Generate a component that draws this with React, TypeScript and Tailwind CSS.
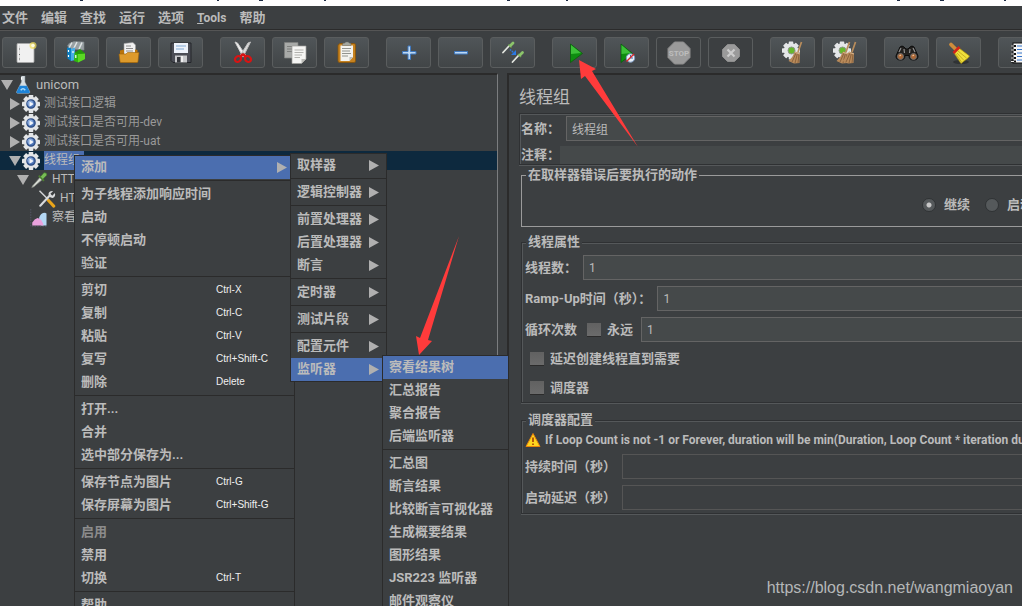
import { Fragment, useState } from "react"
import type { ReactNode } from "react"

type MenuEntry = { label: string; shortcut?: string; sub?: boolean; active?: boolean; disabled?: boolean }

const contextMenu: MenuEntry[][] = [
  [{ label: "添加", sub: true, active: true }],
  [{ label: "为子线程添加响应时间" }, { label: "启动" }, { label: "不停顿启动" }, { label: "验证" }],
  [
    { label: "剪切", shortcut: "Ctrl-X" },
    { label: "复制", shortcut: "Ctrl-C" },
    { label: "粘贴", shortcut: "Ctrl-V" },
    { label: "复写", shortcut: "Ctrl+Shift-C" },
    { label: "删除", shortcut: "Delete" },
  ],
  [{ label: "打开..." }, { label: "合并" }, { label: "选中部分保存为..." }],
  [
    { label: "保存节点为图片", shortcut: "Ctrl-G" },
    { label: "保存屏幕为图片", shortcut: "Ctrl+Shift-G" },
  ],
  [{ label: "启用", disabled: true }, { label: "禁用" }, { label: "切换", shortcut: "Ctrl-T" }],
  [{ label: "帮助" }],
]

const addMenu: MenuEntry[][] = [
  [{ label: "取样器", sub: true }],
  [{ label: "逻辑控制器", sub: true }],
  [{ label: "前置处理器", sub: true }, { label: "后置处理器", sub: true }, { label: "断言", sub: true }],
  [{ label: "定时器", sub: true }],
  [{ label: "测试片段", sub: true }],
  [{ label: "配置元件", sub: true }, { label: "监听器", sub: true, active: true }],
]

const listenerMenu: MenuEntry[][] = [
  [{ label: "察看结果树", active: true }, { label: "汇总报告" }, { label: "聚合报告" }, { label: "后端监听器" }],
  [
    { label: "汇总图" },
    { label: "断言结果" },
    { label: "比较断言可视化器" },
    { label: "生成概要结果" },
    { label: "图形结果" },
    { label: "JSR223 监听器" },
    { label: "邮件观察仪" },
  ],
]

function Menu({ groups, className }: { groups: MenuEntry[][]; className: string }) {
  return (
    <div role="menu" className={`absolute border border-[#2b2b2b] bg-[#3c3f41] ${className}`}>
      {groups.map((group, i) => (
        <Fragment key={i}>
          {i > 0 && <div className="h-1 pt-px"><div className="h-px bg-[#2b2b2b]" /></div>}
          {group.map((item) => (
            <button
              key={item.label}
              role="menuitem"
              disabled={item.disabled}
              className={`flex h-[23px] w-full items-center pb-px pl-[6px] pr-[7px] text-left font-bold ${
                item.active ? "bg-[#4b6eaf]" : ""
              } ${item.disabled ? "text-[#8c8c8c]" : "text-[#bbbbbb]"}`}
            >
              <span className="flex-1">{item.label}</span>
              {item.shortcut && (
                <span className="w-[71px] font-['Liberation_Sans',sans-serif] text-[10px] font-normal text-[#f0f0f0]">
                  {item.shortcut}
                </span>
              )}
              {item.sub && (
                <svg width="10" height="11" viewBox="0 0 10 11">
                  <path d="M0 0L10 5.5L0 11Z" fill="#b0b0b0" />
                </svg>
              )}
            </button>
          ))}
        </Fragment>
      ))}
    </div>
  )
}

function Svg({ children, size = 24 }: { children: ReactNode; size?: number }) {
  return (
    <svg width={size} height={size} viewBox="0 0 24 24" className="shrink-0" aria-hidden="true">
      {children}
    </svg>
  )
}

const gearTeeth = [0, 45, 90, 135, 180, 225, 270, 315]

function GearShape({ cx, cy, r }: { cx: number; cy: number; r: number }) {
  return (
    <g fill="#e4e6e8">
      {gearTeeth.map((a) => (
        <rect key={a} x={cx - r * 0.25} y={cy - r} width={r * 0.5} height={r * 0.5} rx="0.6" transform={`rotate(${a} ${cx} ${cy})`} />
      ))}
      <circle cx={cx} cy={cy} r={r * 0.8} />
    </g>
  )
}

function Dropper({ transform }: { transform?: string }) {
  return (
    <g transform={transform}>
      <path d="M2 13L9 5L11 7L3.500 13.500L1.500 14.500Z" fill="#d5d9d2" stroke="#70756f" strokeWidth="0.6" />
      <path d="M7.500 4L12 8.500" stroke="#4c7c32" strokeWidth="1.600" />
      <path d="M9 5L12 1.500Q14.500 1 14.500 3.500L11 7Z" fill="#79bd57" stroke="#3f7c25" strokeWidth="0.5" />
    </g>
  )
}

function SmallDropper({ transform }: { transform: string }) {
  return (
    <g transform={transform}>
      <path d="M1 11.500L7 5" stroke="#e2e5df" strokeWidth="1.800" strokeLinecap="round" />
      <path d="M6.500 3.500L9.500 6.500" stroke="#6fa350" strokeWidth="1.500" />
      <path d="M8.500 4.500L11 2" stroke="#8cc46b" strokeWidth="2.800" strokeLinecap="round" />
    </g>
  )
}

function BrownBroom({ x = 0 }: { x?: number }) {
  return (
    <g transform={`translate(${x} 0)`}>
      <path d="M20.500 1L17 11" stroke="#b98d5c" strokeWidth="1.700" />
      <path d="M14 10.500L19 12L18.500 22L13 22.500L7.500 20Q12 16 14 10.500Z" fill="#b88a5a" />
      <path d="M15 12L11 21M16.500 12L14 22M18 12.500L17 22" stroke="#775231" strokeWidth="0.7" />
      <path d="M14 11.500L19 13" stroke="#d9b48b" strokeWidth="1" />
    </g>
  )
}

const icons: Record<string, ReactNode> = {
  new: (
    <>
      <rect x="4" y="2.500" width="17" height="19" rx="1" fill="#f1f1f1" stroke="#a7a7a7" strokeWidth="0.8" />
      <path d="M6.500 4.500V20" stroke="#dadada" />
      <path d="M6 8h1M6 13.500h1M6 18h1" stroke="#6a6a6a" />
      <circle cx="20" cy="4.500" r="3.500" fill="#f4df59" opacity="0.7" />
      <circle cx="20" cy="4.500" r="1.800" fill="#fffce0" />
    </>
  ),
  templates: (
    <>
      <path d="M4 2.500L9 .5L19 1V9L6 8L2.500 5Z" fill="#98a0a3" stroke="#7f888b" strokeWidth="0.6" />
      <path d="M7 1.500L4 7M12 1L9 7M17 1.500L14 8" stroke="#dfe4e5" strokeWidth="1.500" />
      <path d="M2 6.500L6 7V20L2.500 17.500Z" fill="#0c7fc4" />
      <path d="M6 8L10 6.500V19L6 20Z" fill="#46ade8" />
      <path d="M3.500 9V11M3.500 14V16M8 10V12" stroke="#fff" strokeWidth="1.200" />
      <path d="M15 9L20 12.500V18L13 21.500L9 20L9.500 12Z" fill="#2fb80e" />
      <path d="M13 12.500L20 12.500V18L13 21.500Z" fill="#5bd824" />
      <path d="M9.500 12L15 8L20 12.500L13 13Z" fill="#23990b" />
      <path d="M10.800 14V17" stroke="#fff" strokeWidth="1.200" />
    </>
  ),
  open: (
    <>
      <path d="M7 2.500L16 1.500L18.500 4V15H7Z" fill="#f1f1f1" stroke="#9b9b9b" strokeWidth="0.6" />
      <path d="M9 5H14M9 7.500H16M9 10H16" stroke="#8c8c8c" />
      <path d="M3 9.500L7 8.500V14H18V8.500L20.500 9V20.500Q20.500 21.500 19.500 21.500H4Q3 21.500 3 20Z" fill="#b9740b" />
      <path d="M2 13H9L10.500 11.500H22L21 20.500Q21 21.500 20 21.500H4Q3 21.500 3 20.500Z" fill="#dd9a2b" stroke="#9a6108" strokeWidth="0.6" />
    </>
  ),
  save: (
    <>
      <path d="M2 2H22V21.500H4L2 19.500Z" fill="#4b4d55" stroke="#24262b" />
      <rect x="5" y="2" width="14" height="10" fill="#edf2fa" />
      <path d="M7 5H17M7 8H15" stroke="#82a9d3" strokeWidth="1.200" />
      <path d="M6 14.500H18V21.500H6Z" fill="#c7c8cb" />
      <rect x="8" y="16" width="3.500" height="5.500" fill="#33353a" />
      <path d="M13 15V21" stroke="#efefef" strokeWidth="2" />
    </>
  ),
  cut: (
    <>
      <path d="M4 1L6.500 2L14.500 14L12 16Z" fill="#f2f2f2" stroke="#c9c9c9" strokeWidth="1" />
      <path d="M19.500 1L17 2L9.500 14L12 16Z" fill="#dcdcdc" stroke="#c0c0c0" strokeWidth="1" />
      <circle cx="12" cy="12.500" r="0.9" fill="#777" />
      <path d="M12 13L9 16M12 13L15 16" stroke="#d81414" strokeWidth="2.500" />
      <ellipse cx="7" cy="18" rx="3.200" ry="2.700" fill="none" stroke="#d81414" strokeWidth="2.200" transform="rotate(-35 7 18)" />
      <ellipse cx="17" cy="18" rx="3.200" ry="2.700" fill="none" stroke="#d81414" strokeWidth="2.200" transform="rotate(35 17 18)" />
    </>
  ),
  copy: (
    <>
      <path d="M1.500 1.500H15V17H1.500Z" fill="#a8aaa8" stroke="#7f817f" strokeWidth="0.7" />
      <path d="M4 5.500H12M4 8H12M4 10.500H12" stroke="#7d7f7d" />
      <path d="M9 5H23V18L18.500 22.500H9Z" fill="#f5f5f3" stroke="#9f9f9b" strokeWidth="0.7" />
      <path d="M18.500 22.500V18H23Z" fill="#bcbcb8" />
      <path d="M11.500 9H20.500M11.500 11.500H20.500M11.500 14H19M11.500 16.500H17" stroke="#b2b2ae" />
    </>
  ),
  paste: (
    <>
      <path d="M4 3.500Q4 2.500 5 2.500H19Q20.500 2.500 20.500 4V20Q20.500 21.500 19 21.500H5Q3 21.500 3 20V4Z" fill="#c68220" stroke="#885409" strokeWidth="0.8" />
      <path d="M5.500 4.500H18V16L14.500 20H5.500Z" fill="#f3f3ef" />
      <path d="M14.500 20V16H18Z" fill="#bdbdb8" />
      <path d="M7.500 4.500V3Q8 2 10 2L10.500 1H13.500L14 2Q16 2 16 3V4.500Z" fill="#a3a69f" stroke="#686b65" strokeWidth="0.5" />
      <path d="M7 7.500H16M7 10H15M7 12.500H16M7 15H13" stroke="#92948f" />
    </>
  ),
  plus: <path d="M11 5h2.500v5.500h5.500v2.500H13.500v5.500h-2.500v-5.500H5.500v-2.500H11Z" fill="#bcd8f5" stroke="#3f78bf" />,
  minus: <path d="M5.500 10.500h13v2.500h-13Z" fill="#bcd8f5" stroke="#3f78bf" />,
  toggle: (
    <>
      <SmallDropper transform="translate(1 0)" />
      <SmallDropper transform="translate(10.500 9.500)" />
      <path d="M9 8.500L13 12" stroke="#2b78e4" strokeWidth="1.500" strokeDasharray="1.500 1" />
      <path d="M15 9V14H10Z" fill="#2b78e4" />
    </>
  ),
  start: (
    <>
      <path d="M7.500 3L19.500 12.500L7.500 21.500Z" fill="#0e8d10" stroke="#075c09" strokeWidth="0.7" />
      <path d="M8 4L18 12L8 13Z" fill="#3cc038" />
    </>
  ),
  startNoTimers: (
    <>
      <path d="M6 3L17.500 12.500L6 21.500Z" fill="#0e8d10" stroke="#075c09" strokeWidth="0.7" />
      <path d="M6.500 4L16 12L6.500 13Z" fill="#3cc038" />
      <circle cx="15.500" cy="17" r="4.200" fill="#e8eff8" stroke="#7d9ac2" />
      <path d="M15.500 14V17H18" stroke="#3d6db0" fill="none" />
      <path d="M11.500 20.500L19 13" stroke="#d92929" strokeWidth="1.400" />
    </>
  ),
  stop: (
    <>
      <path d="M7.500 1H16.500L23 7.500V16.500L16.500 23H7.500L1 16.500V7.500Z" fill="#9a9a9a" stroke="#8d8d8d" />
      <text x="12" y="15" textAnchor="middle" fontSize="8" fontWeight="bold" fill="#bdbdbd">STOP</text>
    </>
  ),
  shutdown: (
    <>
      <path d="M8.500 3.500H15.500L20.500 8.500V15.500L15.500 20.500H8.500L3.500 15.500V8.500Z" fill="#9a9a9a" stroke="#8d8d8d" />
      <path d="M8.500 8.500L15.500 15.500M15.500 8.500L8.500 15.500" stroke="#cccccc" strokeWidth="2.200" />
    </>
  ),
  clear: (
    <>
      <GearShape cx={10} cy={9.5} r={9} />
      <circle cx="10.500" cy="9.500" r="3.500" fill="#66b82d" stroke="#8c968a" />
      <BrownBroom />
    </>
  ),
  clearAll: (
    <>
      <GearShape cx={9} cy={9.500} r={9} />
      <circle cx="9.500" cy="9.500" r="3.500" fill="#66b82d" stroke="#8c968a" />
      <BrownBroom x={-4} />
      <BrownBroom x={2} />
    </>
  ),
  search: (
    <>
      <path d="M5 6Q7 4 9 6L11 8H13L15 6Q17 4 19 6L23 15Q23 19 18.500 19Q14 19 14 14.500H10Q10 19 5.500 19Q1 19 1 15Z" fill="#23211f" stroke="#0c0c0c" />
      <path d="M6 7L4 11M18 7L20 11M9 8L9.500 12M15 8L14.500 12" stroke="#8f8f8f" strokeWidth="1.200" />
      <circle cx="5.500" cy="15.500" r="3" fill="#ab6635" stroke="#6d6d6d" />
      <circle cx="18.500" cy="15.500" r="3" fill="#ab6635" stroke="#6d6d6d" />
      <path d="M4.500 15L6 14M17.500 15L19 14" stroke="#f1c49c" strokeWidth="1.200" />
    </>
  ),
  reset: (
    <>
      <ellipse cx="14" cy="21" rx="8" ry="2" fill="#303335" />
      <path d="M4 3.500L9.500 9" stroke="#cf8c3b" strokeWidth="3.800" strokeLinecap="round" />
      <path d="M12 7L22.500 15L21 17L14 22.500L7 12Z" fill="#efe03c" stroke="#a98e0b" strokeWidth="0.7" />
      <path d="M11 10L19.500 17M10 12L17 19.500M8.500 12.500L14.500 21" stroke="#b69b12" strokeWidth="0.7" />
      <path d="M12.500 6L6.500 12" stroke="#d32418" strokeWidth="2.600" />
    </>
  ),
  helper: (
    <>
      <rect x="4" y="2" width="19" height="20" fill="#f7f7f7" stroke="#111" />
      <path d="M8 5H20M8 8.500H20M8 12H20M8 15.500H20M8 19H20" stroke="#3574c9" />
      <path d="M2 5H7M2 9H7M2 13H7M2 17H7M2 20.500H7" stroke="#111" strokeWidth="2.200" />
      <path d="M2 5H5M2 9H5M2 13H5M2 17H5M2 20.500H5" stroke="#eee" />
    </>
  ),
  flask: (
    <>
      <path d="M10 0H14.500V8L21 21Q21.500 23 19.500 23H5Q3 23 3.500 21L10 8Z" fill="#d6dde1" stroke="#aeb9c0" strokeWidth="0.6" />
      <path d="M7.500 13H17L21 21Q21.500 23 19.500 23H5Q3 23 3.500 21Z" fill="#1c83d8" />
      <path d="M9 19Q12 15 15 19" stroke="#a5d8fa" strokeWidth="2" fill="none" />
      <path d="M10 1.500V5" stroke="#fff" strokeWidth="1.500" />
    </>
  ),
  group: (
    <>
      <GearShape cx={12} cy={12} r={12} />
      <circle cx="12" cy="12" r="5.500" fill="#4d74b5" stroke="#2c4c84" strokeWidth="1.800" />
      <circle cx="11" cy="11" r="3.800" fill="#86a7da" />
      <path d="M10 8.500L15.500 12L10 15.500Z" fill="#f4f7fb" />
    </>
  ),
  sampler: <Dropper transform="translate(0 0) scale(1.550)" />,
  config: (
    <>
      <path d="M2 1L15 14" stroke="#d2d4d6" strokeWidth="2" />
      <path d="M14 14L21 21.500" stroke="#e9a51a" strokeWidth="4" strokeLinecap="round" />
      <path d="M3 21L16 7" stroke="#d9dbdd" strokeWidth="2.800" strokeLinecap="round" />
      <path d="M20 1.500L16.500 5L19 7.500L22.500 4Q24 9 19.500 10.500Q14 10 14 5Q15 1 20 1.500Z" fill="#d9dbdd" />
    </>
  ),
  results: (
    <>
      <path d="M1 0V23H23" stroke="#5b5f70" strokeWidth="1" fill="none" strokeDasharray="2 1.500" />
      <path d="M12 12Q14 5 20 5L22 6V22H15Z" fill="#b4d8f5" />
      <path d="M3 22V18Q6 13 10 12Q16 13 18 22Z" fill="#eaa2de" />
    </>
  ),
}

const toolGroups = [
  [["new", "新建"], ["templates", "模板"], ["open", "打开"], ["save", "保存"]],
  [["cut", "剪切"], ["copy", "复制"], ["paste", "粘贴"]],
  [["plus", "展开"], ["minus", "收起"], ["toggle", "切换"]],
  [["start", "启动"], ["startNoTimers", "不停顿开始"], ["stop", "停止"], ["shutdown", "关闭"]],
  [["clear", "清除"], ["clearAll", "清除全部"]],
  [["search", "查找"], ["reset", "重置查找"]],
  [["helper", "函数助手"]],
]

const treeRows = [
  { label: "unicom", icon: "flask", pad: "pl-px", open: true, light: true },
  { label: "测试接口逻辑", icon: "group", pad: "pl-[9px]", open: false },
  { label: "测试接口是否可用-dev", icon: "group", pad: "pl-[9px]", open: false },
  { label: "测试接口是否可用-uat", icon: "group", pad: "pl-[9px]", open: false },
  { label: "线程组", icon: "group", pad: "pl-[9px]", open: true, light: true, selected: true },
  { label: "HTTP", icon: "sampler", pad: "pl-[17px]", open: true, light: true },
  { label: "HTTP", icon: "config", pad: "pl-[38px]", light: true },
  { label: "察看结果树", icon: "results", pad: "pl-[30px]", light: true },
]

function Tree() {
  return (
    <ul role="tree" className="text-xs leading-[19px]">
      {treeRows.map((row, i) => (
        <li
          key={i}
          role="treeitem"
          className={`flex h-[19px] items-center ${row.pad} ${row.selected ? "bg-[#0d293e]" : ""} ${
            row.light ? "text-[#bbbbbb]" : "text-[#999999]"
          }`}
        >
          {row.open !== undefined && (
            <svg width="12" height="12" viewBox="0 0 12 12" className="mr-px shrink-0">
              <path d={row.open ? "M0 1H12L6 11Z" : "M1 0L11 6L1 12Z"} fill="#b0b0b0" />
            </svg>
          )}
          <Svg size={18}>{icons[row.icon]}</Svg>
          <span className={`ml-1 ${row.selected ? "bg-[#4b6eaf] pr-1" : ""} ${row.icon === "flask" ? "text-[13px]" : ""}`}>
            {row.label}
          </span>
        </li>
      ))}
    </ul>
  )
}

const inputBase = "min-w-0 flex-1 px-[5px] text-xs font-normal text-[#bbbbbb] outline-none"
const inputClass = `h-[25px] border border-r-0 border-[#646464] bg-[#45494a] ${inputBase}`
const disabledInput = `h-[25px] border border-r-0 border-[#555555] bg-[#3c3f41] ${inputBase}`
const checkClass =
  "h-[14px] w-[14px] shrink-0 appearance-none border-b border-[#2b2b2b] bg-gradient-to-b from-[#616161] to-[#6b6b6b] checked:from-[#4b6eaf] checked:to-[#4b6eaf]"
const radioClass =
  "h-[14px] w-[14px] shrink-0 appearance-none rounded-full border border-[#2f3234] bg-[#55595b] checked:bg-[radial-gradient(circle,#c8c8c8_2px,#55595b_3px)]"
const etched = "border border-r-0 border-[#2f3133] shadow-[inset_1px_1px_0_#55585a,0_1px_0_#55585a]"

function Group({ title, children, className }: { title: string; children: ReactNode; className: string }) {
  return (
    <section className={`relative ml-[2px] ${className}`}>
      <h2 className="absolute -top-[10px] left-1 bg-[#3c3f41] px-[2px] leading-[18px]">{title}</h2>
      {children}
    </section>
  )
}

function ThreadGroupForm() {
  const [name, setName] = useState("线程组")
  const [threads, setThreads] = useState("1")
  const [rampUp, setRampUp] = useState("1")
  const [loops, setLoops] = useState("1")

  return (
    <form className="ml-[9px] min-w-0 flex-1 border-l-2 border-t-2 border-[#2b2b2b] pl-[10px] font-bold">
      <h1 className="mt-[11px] text-[17px] font-normal leading-[22px]">线程组</h1>

      <div className={`mt-[5px] h-[52px] pl-px pt-[2px] ${etched}`}>
        <div className="flex items-center gap-[6px]">
          <label htmlFor="name">名称：</label>
          <input id="name" value={name} onChange={(e) => setName(e.target.value)} className={inputClass} />
        </div>
        <div className="mt-[5px] flex h-[18px] items-center">
          <label htmlFor="comment">注释：</label>
          <input id="comment" className={`h-[18px] bg-[#45494a] ${inputBase}`} />
        </div>
      </div>

      {/* 错误处理 */}
      <Group title="在取样器错误后要执行的动作" className="mt-[10px] h-[52px] border border-r-0 border-[#9b9b9b]">
        <div className="flex items-center gap-[15px] overflow-hidden whitespace-nowrap pl-[400px] pt-5">
          <label className="flex shrink-0 items-center gap-2">
            <input type="radio" name="action" defaultChecked className={radioClass} />
            继续
          </label>
          <label className="flex shrink-0 items-center gap-2">
            <input type="radio" name="action" className={radioClass} />
            启动下一进程循环
          </label>
        </div>
      </Group>

      {/* 线程属性 */}
      <Group title="线程属性" className={`mt-[15px] pb-1 pl-[3px] pt-3 ${etched}`}>
        <div className="flex flex-col gap-[6px]">
          <div className="flex items-center gap-[6px]">
            <label htmlFor="threads">线程数：</label>
            <input id="threads" value={threads} onChange={(e) => setThreads(e.target.value)} className={inputClass} />
          </div>
          <div className="flex items-center gap-[6px]">
            <label htmlFor="ramp">Ramp-Up时间（秒）：</label>
            <input id="ramp" value={rampUp} onChange={(e) => setRampUp(e.target.value)} className={inputClass} />
          </div>
          <div className="flex items-center gap-2">
            <label htmlFor="loops">循环次数</label>
            <label className="flex items-center gap-[6px] pl-[2px]">
              <input type="checkbox" className={checkClass} />
              永远
            </label>
            <input id="loops" value={loops} onChange={(e) => setLoops(e.target.value)} className={inputClass} />
          </div>
        </div>
        <div className="mt-[7px] pl-[5px]">
          <label className="flex h-5 items-center gap-[6px]">
            <input type="checkbox" className={checkClass} />
            延迟创建线程直到需要
          </label>
          <label className="mt-[9px] flex h-5 items-center gap-[6px]">
            <input type="checkbox" className={checkClass} />
            调度器
          </label>
        </div>
      </Group>

      {/* 调度器配置 */}
      <Group title="调度器配置" className={`mt-[17px] pb-[3px] pl-[3px] pt-[9px] ${etched}`}>
        <p className="flex h-5 items-center gap-1 overflow-hidden whitespace-nowrap text-xs">
          <svg width="16" height="16" viewBox="0 0 16 16" className="shrink-0">
            <path d="M8 1.500L15 14.500H1Z" fill="#ffd51e" stroke="#e8820c" strokeLinejoin="round" />
            <path d="M8 5.500V10M8 11.500V13" stroke="#a33a06" strokeWidth="1.600" />
          </svg>
          If Loop Count is not -1 or Forever, duration will be min(Duration, Loop Count * iteration duration)
        </p>
        <div className="mt-1 flex flex-col gap-[6px]">
          <div className="flex items-center gap-[6px]">
            <label htmlFor="duration">持续时间（秒）</label>
            <input id="duration" disabled className={disabledInput} />
          </div>
          <div className="flex items-center gap-[6px]">
            <label htmlFor="delay">启动延迟（秒）</label>
            <input id="delay" disabled className={disabledInput} />
          </div>
        </div>
      </Group>
    </form>
  )
}

export default function App() {
  return (
    <div className="relative flex h-screen flex-col overflow-hidden bg-[#3c3f41] font-['Roboto','Noto_Sans_CJK_SC',sans-serif] text-[13px] leading-[18px] text-[#bbbbbb]">
      <div className="h-[6px] shrink-0 bg-white">
        <svg width="1022" height="2" viewBox="0 0 1022 2" aria-hidden="true">
          <path d="M80 0h3v1h-3zM217 0h2v1h-2zM259 0h4v1h-4zM324 0h2v1h-2zM507 0h3v1h-3zM566 0h2v1h-2zM897 0h3v1h-3zM940 0h4v1h-4zM1004 0h2v1h-2z" fill="#1c2a44" />
        </svg>
      </div>

      <nav className="flex h-[25px] shrink-0 items-center gap-[13px] border-b border-[#555555] pb-px pl-[2px] font-bold shadow-[inset_0_-1px_0_#2b2b2b]">
        <button>文件</button>
        <button>编辑</button>
        <button>查找</button>
        <button>运行</button>
        <button>选项</button>
        <button className="text-xs"><span className="underline">T</span>ools</button>
        <button>帮助</button>
      </nav>

      <div className="flex shrink-0 gap-[17px] overflow-hidden pb-[5px] pl-[2px] pt-[6px]">
        {toolGroups.map((group, i) => (
          <div key={i} className="flex shrink-0 gap-[7px]">
            {group.map(([icon, label]) => {
              const off = icon === "stop" || icon === "shutdown"
              return (
                <button
                  key={icon}
                  aria-label={label}
                  disabled={off}
                  className={`flex h-[31px] w-[45px] items-center justify-center rounded-[3px] border border-[#5a5d5e] ${
                    off ? "" : "bg-gradient-to-b from-[#505558] to-[#414547]"
                  }`}
                >
                  <Svg>{icons[icon]}</Svg>
                </button>
              )
            })}
          </div>
        ))}
      </div>

      <main className="flex min-h-0 flex-1 whitespace-nowrap">
        <aside className="relative w-[498px] shrink-0 border-r border-t-2 border-r-[#7b7d7f] border-t-[#2b2b2b]">
          <Tree />
          <Menu groups={contextMenu} className="left-[74px] top-[80px] w-[221px]" />
          <Menu groups={addMenu} className="left-[290px] top-[78px] w-[97px]" />
          <Menu groups={listenerMenu} className="left-[382px] top-[280px] z-10 w-[127px]" />
        </aside>
        <ThreadGroupForm />
      </main>

      <p className="absolute bottom-[6px] right-[9px] font-['Liberation_Sans',sans-serif] text-base leading-6 text-[#b5b7b8]">
        https://blog.csdn.net/wangmiaoyan
      </p>

      {/* 标注箭头 */}
      <svg width="1022" height="606" viewBox="0 0 1022 606" className="pointer-events-none absolute left-0 top-0 z-20">
        <path d="M579 60L596 69L592 71L638 147L585 76L581 79Z" fill="#ff3b3b" />
        <path d="M419 355L416 336L420 338L459 236L428 340L432 341Z" fill="#ff3b3b" />
      </svg>
    </div>
  )
}
